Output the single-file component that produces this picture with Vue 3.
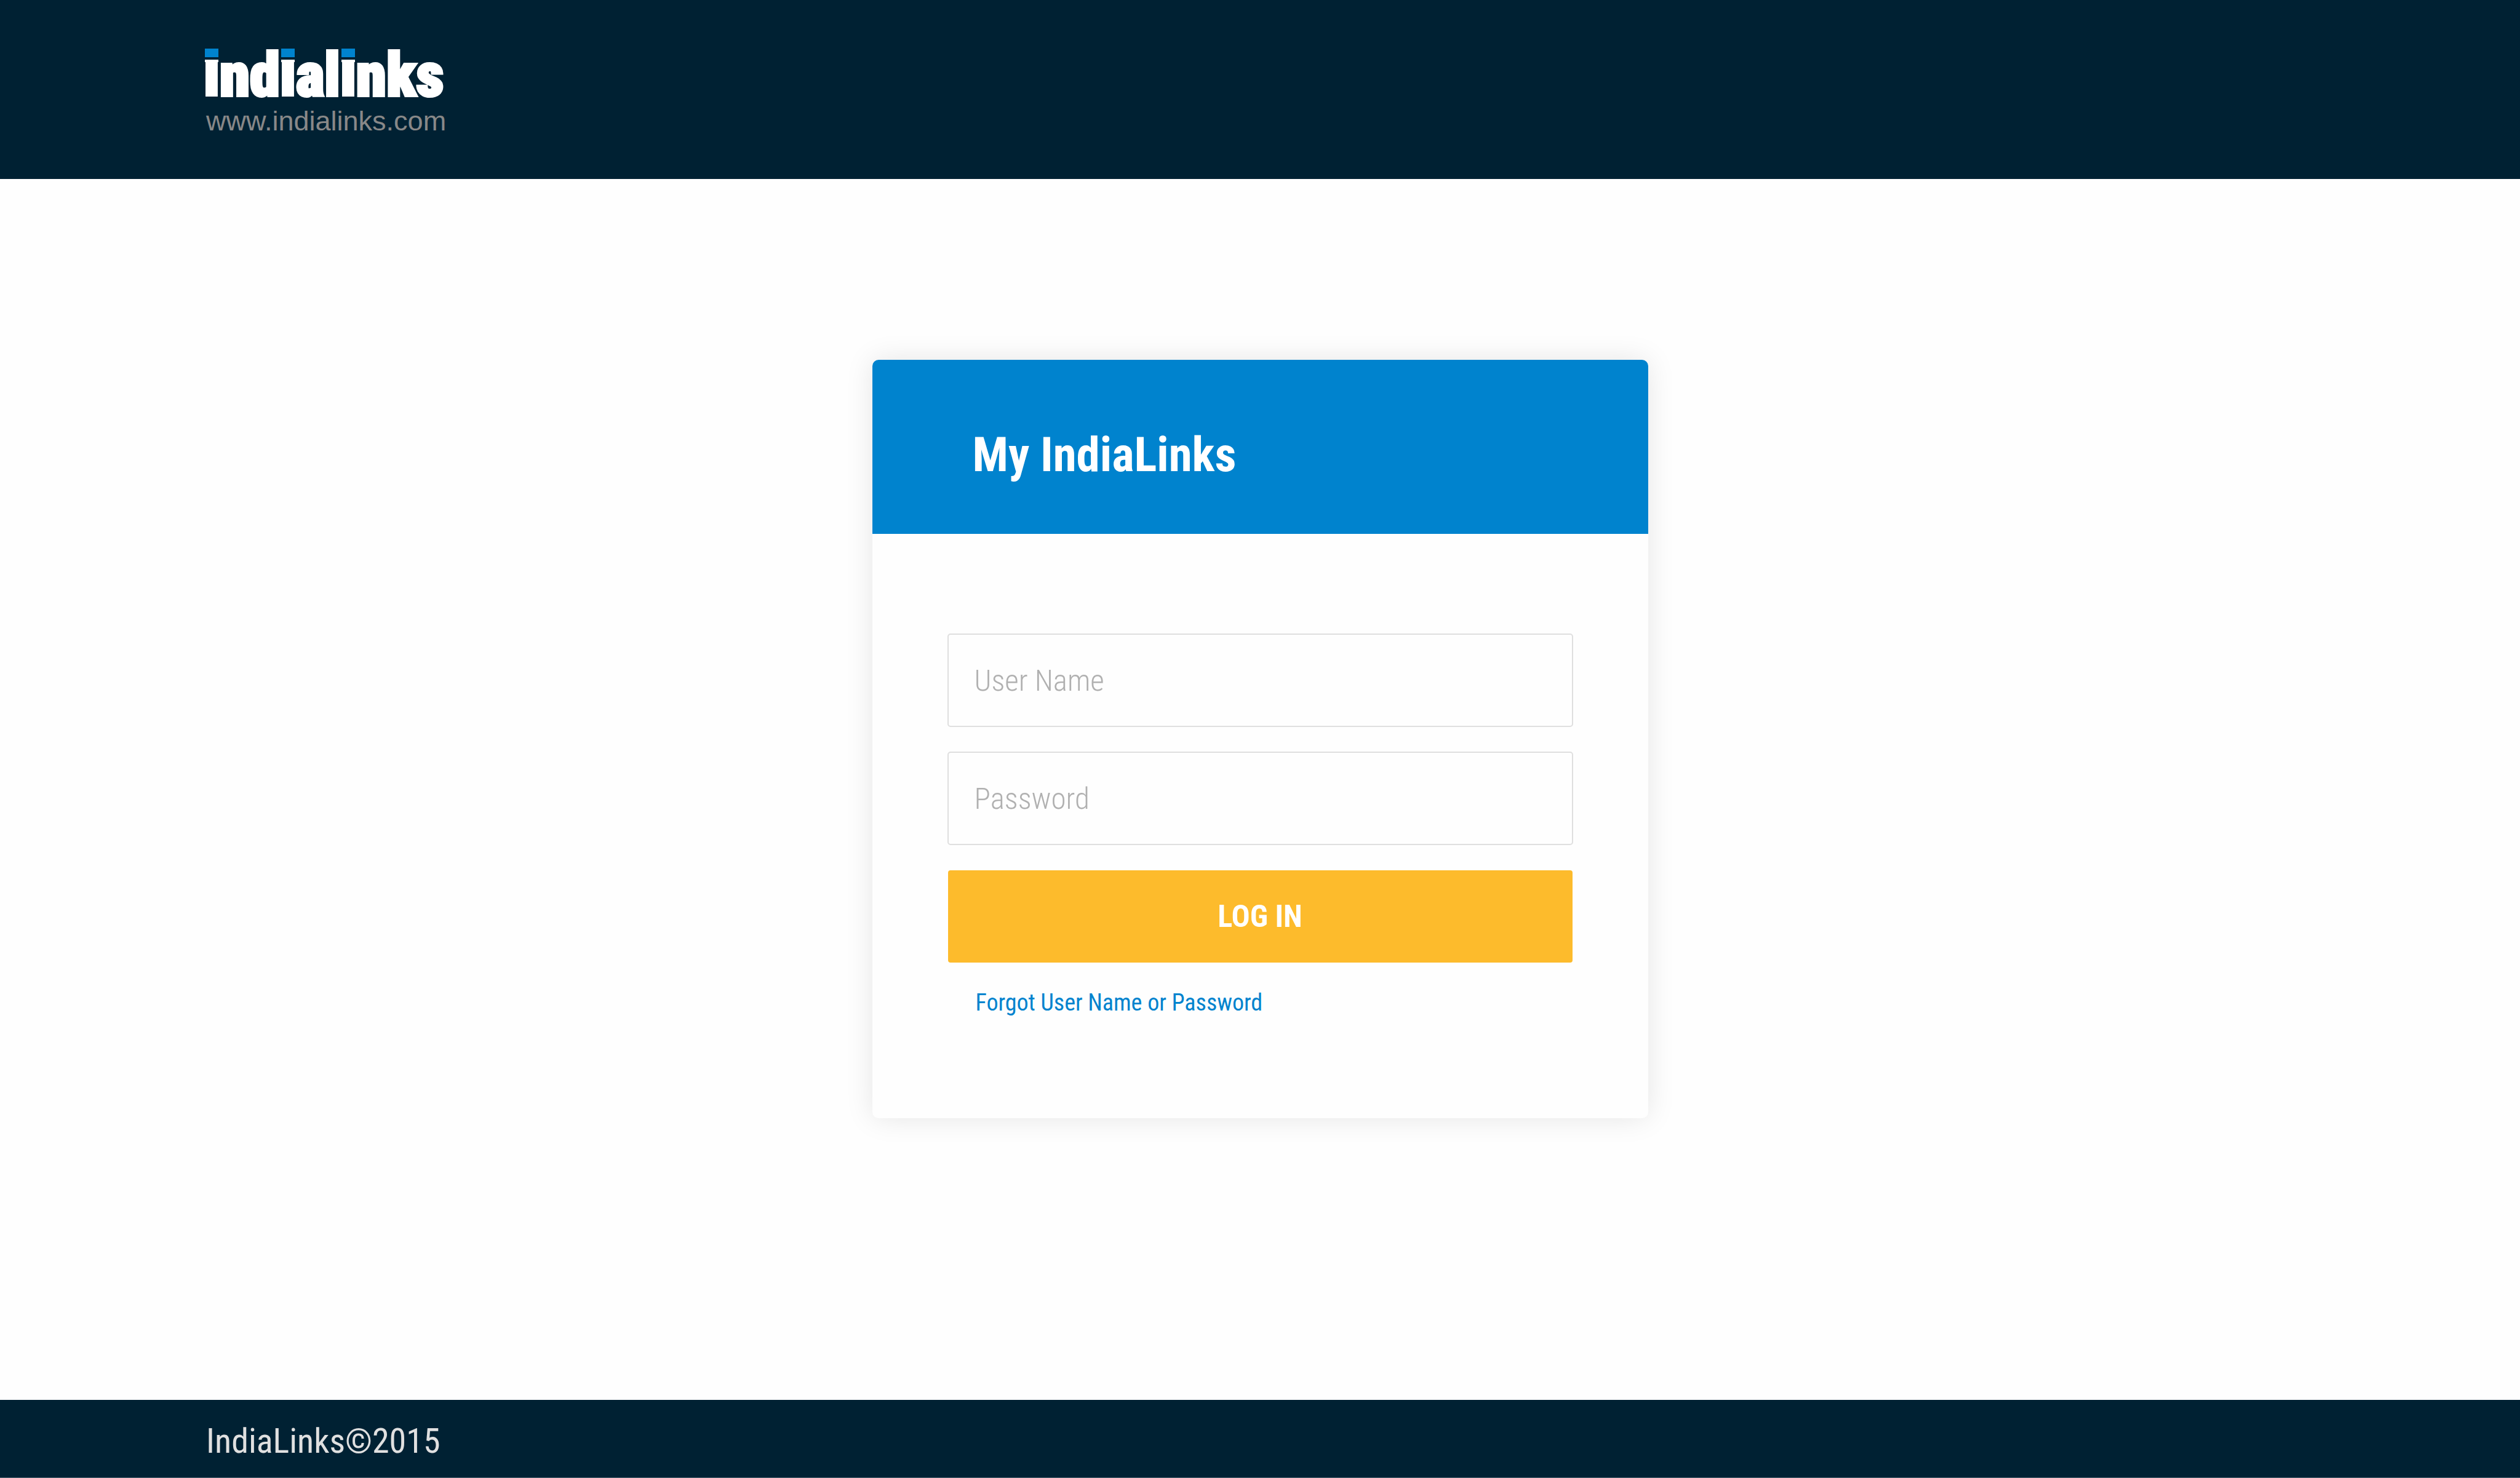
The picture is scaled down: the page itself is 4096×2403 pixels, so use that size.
<script setup>
import { ref } from 'vue'

const userName = ref('')
const password = ref('')
</script>

<template>
  <div class="page">
    <header class="site-header">
      <a class="logo" href="#">
        <span class="wordmark"><span class="dot">i</span>nd<span class="dot">i</span>al<span class="dot">i</span>nks</span>
        <span class="domain">www.indialinks.com</span>
      </a>
    </header>

    <main class="content">
      <section class="card">
        <h1 class="card-title">My IndiaLinks</h1>
        <form class="card-form" @submit.prevent>
          <input v-model="userName" class="field" type="text" placeholder="User Name" aria-label="User Name" />
          <input v-model="password" class="field" type="password" placeholder="Password" aria-label="Password" />
          <button class="submit" type="submit">LOG IN</button>
          <a class="forgot" href="#">Forgot User Name or Password</a>
        </form>
      </section>
    </main>

    <footer class="site-footer">IndiaLinks©2015</footer>
  </div>
</template>

<style>
body {
  margin: 0;
}
</style>

<style scoped>
.page {
  display: flex;
  flex-direction: column;
  min-height: 100vh;
  background: #fefefe;
  font-family: "Roboto Condensed", Roboto, sans-serif;
}

.site-header {
  box-sizing: border-box;
  height: 291px;
  padding: 70px 331px 0;
  background: #002133;
}

.logo {
  display: inline-flex;
  flex-direction: column;
  text-decoration: none;
}

.wordmark {
  color: #fff;
  font-size: 99px;
  font-weight: 900;
  line-height: 104px;
  -webkit-text-stroke: 4px #fff;
}

.dot {
  position: relative;
}

/* Square blue block over the dot of each i, a gap, then the top of the stem */
.dot::before {
  content: "";
  position: absolute;
  top: 15px;
  left: 2px;
  right: 2px;
  height: 22px;
  background: linear-gradient(#0083ce 14px, #002133 14px 18px, #fff 18px);
}

.domain {
  padding-left: 4px;
  color: #888;
  font-family: "Liberation Sans", Arial, sans-serif;
  font-size: 45px;
  line-height: 46px;
}

.content {
  flex: 1;
  display: flex;
  justify-content: center;
  align-items: flex-start;
  padding: 294px 0;
}

.card {
  width: 1261px;
  border-radius: 10px;
  background: #fefefe;
  box-shadow: 0 0 46px rgba(0, 0, 0, 0.1);
}

.card-title {
  margin: 0;
  padding: 109px 163px 82px;
  border-radius: 10px 10px 0 0;
  background: #0083ce;
  color: #fff;
  font-size: 77px;
  font-weight: 700;
  line-height: 92px;
}

.card-form {
  display: flex;
  flex-direction: column;
  gap: 40px;
  padding: 162px 122px 164px;
}

.field {
  box-sizing: border-box;
  width: 100%;
  height: 152px;
  padding: 0 42px;
  border: 2px solid #dfdfdf;
  border-radius: 5px;
  background: #fefefe;
  color: #333;
  font: 300 49px "Roboto Condensed", Roboto, sans-serif;
}

.field::placeholder {
  color: #b0b0b0;
  opacity: 1;
}

.submit {
  height: 152px;
  padding: 0;
  border: 1px solid transparent;
  border-radius: 5px;
  background: #fdbb2c padding-box;
  color: #fff;
  font: 700 50px "Roboto Condensed", Roboto, sans-serif;
}

.forgot {
  align-self: flex-start;
  margin-left: 46px;
  color: #0083ce;
  font-size: 38px;
  line-height: 48px;
  text-decoration: none;
}

.site-footer {
  box-sizing: border-box;
  height: 127px;
  padding: 0 335px;
  border-bottom: 1px solid #4d6470;
  background: #002133;
  color: #e0e0e0;
  font-size: 56px;
  line-height: 134px;
}
</style>
